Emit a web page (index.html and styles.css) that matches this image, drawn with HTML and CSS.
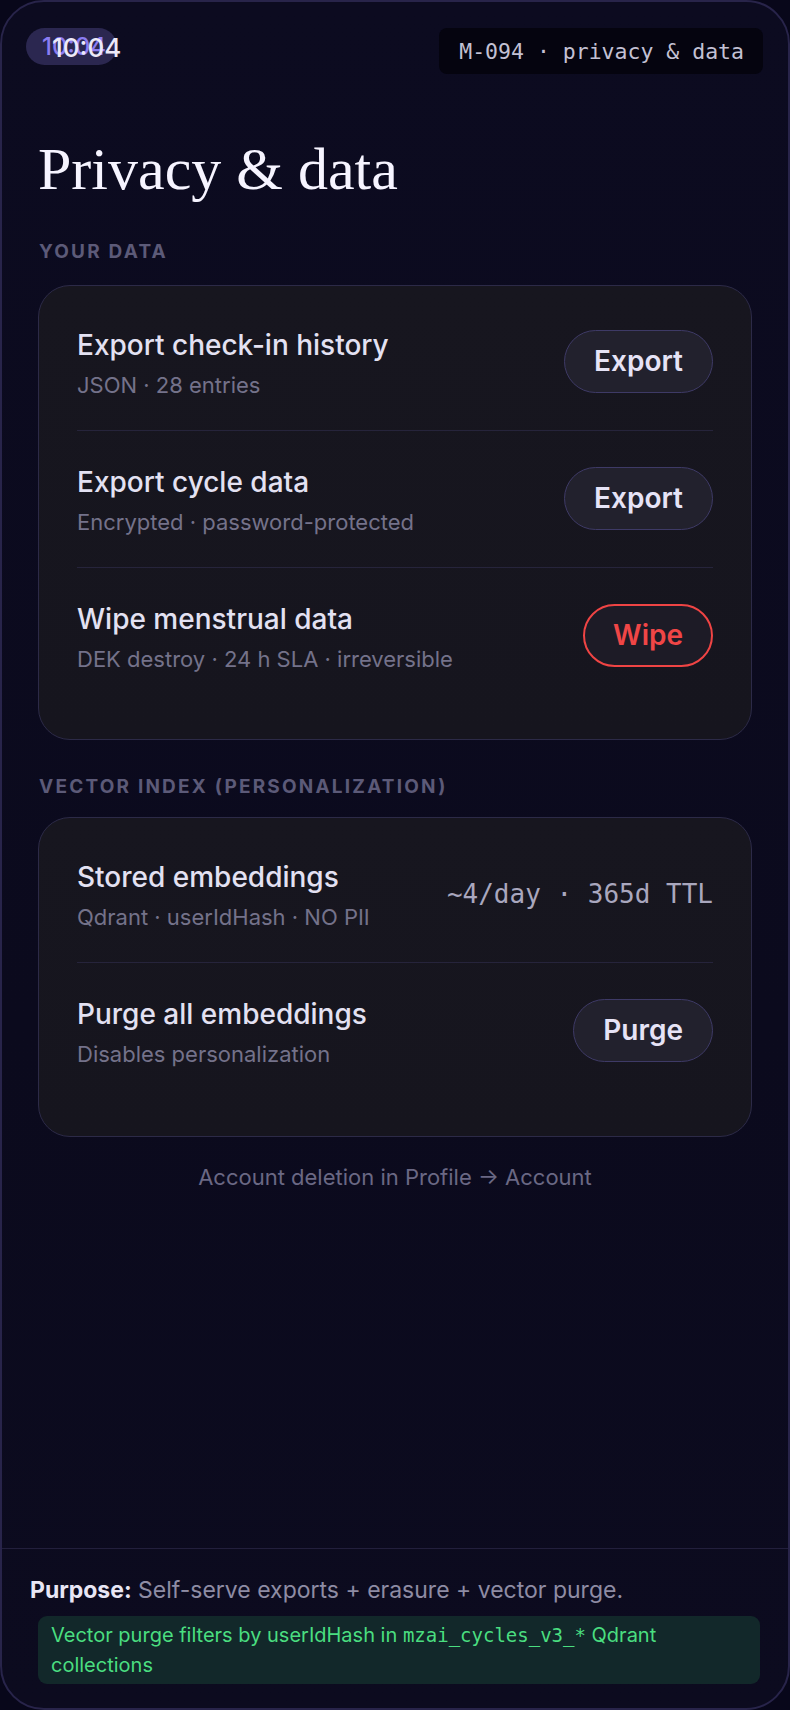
FILE: index.html
```html
<!DOCTYPE html>
<html lang="en">
<head>
<meta charset="utf-8">
<title>Privacy &amp; data</title>
<link rel="stylesheet" href="styles.css">
</head>
<body>
<div class="frame">
  <div class="status">
    <div class="pill"><span class="pill-ghost">10:04</span></div>
    <span class="time">10:04</span>
    <span class="tag">M-094 · privacy &amp; data</span>
  </div>

  <main class="content">
    <h1 class="title">Privacy &amp; data</h1>

    <div class="label">YOUR DATA</div>
    <section class="card">
      <div class="row">
        <div class="text">
          <div class="row-title">Export check-in history</div>
          <div class="row-sub">JSON · 28 entries</div>
        </div>
        <button class="btn">Export</button>
      </div>
      <div class="row">
        <div class="text">
          <div class="row-title">Export cycle data</div>
          <div class="row-sub">Encrypted · password-protected</div>
        </div>
        <button class="btn">Export</button>
      </div>
      <div class="row">
        <div class="text">
          <div class="row-title">Wipe menstrual data</div>
          <div class="row-sub">DEK destroy · 24 h SLA · irreversible</div>
        </div>
        <button class="btn btn-danger">Wipe</button>
      </div>
    </section>

    <div class="label label-2">VECTOR INDEX (PERSONALIZATION)</div>
    <section class="card">
      <div class="row">
        <div class="text">
          <div class="row-title">Stored embeddings</div>
          <div class="row-sub">Qdrant · userIdHash · NO PII</div>
        </div>
        <span class="stat">~4/day · 365d TTL</span>
      </div>
      <div class="row">
        <div class="text">
          <div class="row-title">Purge all embeddings</div>
          <div class="row-sub">Disables personalization</div>
        </div>
        <button class="btn">Purge</button>
      </div>
    </section>

    <p class="note">Account deletion in Profile → Account</p>
  </main>

  <footer class="footer">
    <p class="purpose"><strong>Purpose:</strong> Self-serve exports + erasure + vector purge.</p>
    <div class="callout">Vector purge filters by userIdHash in <code>mzai_cycles_v3_*</code> Qdrant collections</div>
  </footer>
</div>
</body>
</html>
```

FILE: styles.css
```css
* { box-sizing: border-box; }

html, body {
  margin: 0;
  padding: 0;
  background: #08071a;
}

body {
  font-family: Inter, "Noto Sans", sans-serif;
  color: #e4e2f3;
}

.frame {
  position: relative;
  width: 790px;
  height: 1710px;
  border: 2px solid #28244a;
  border-radius: 44px;
  overflow: hidden;
  background: linear-gradient(180deg, #0c0b20 0%, #0b0a1d 60%, #0c0b1f 100%);
  display: flex;
  flex-direction: column;
}

/* status bar */
.status {
  padding: 26px 0 0 24px;
  height: 63px;
}

.pill {
  width: 91px;
  height: 37px;
  border-radius: 19px;
  background: #2b2750;
  display: flex;
  align-items: center;
  padding-left: 16px;
}

.pill-ghost {
  font-size: 24px;
  font-weight: 500;
  color: #8a7cf2;
  line-height: 1;
}

.time {
  position: absolute;
  left: 50px;
  top: 30px;
  font-size: 26px;
  line-height: 31px;
  font-weight: 500;
  color: #ece9f8;
}

.tag {
  position: absolute;
  top: 26px;
  right: 25px;
  height: 46px;
  padding: 0 19px 0 20px;
  display: flex;
  align-items: center;
  border-radius: 8px;
  background: #05040f;
  font-family: "DejaVu Sans Mono", "Liberation Mono", monospace;
  font-size: 21.5px;
  color: #c3c1d4;
  white-space: nowrap;
}

/* content */
.content {
  padding: 0 36px;
}

.title {
  margin: 68px 0 0;
  font-family: "Liberation Serif", "DejaVu Serif", serif;
  font-weight: 400;
  font-size: 60px;
  line-height: 72px;
  color: #f6f4ff;
}

.label {
  margin-top: 35px;
  font-size: 19px;
  line-height: 24px;
  font-weight: 700;
  letter-spacing: 2.2px;
  color: #5c5a78;
  padding-left: 1px;
}

.label-2 {
  margin-top: 35px;
}

.card {
  margin-top: 21px;
  background: linear-gradient(180deg, #17161f 0%, #16151e 100%);
  border: 1px solid #2c2a47;
  border-radius: 32px;
  padding: 8px 38px 35px;
}

.label-2 + .card {
  margin-top: 18px;
  padding-bottom: 37px;
}

.row {
  display: flex;
  align-items: center;
  justify-content: space-between;
  padding: 34px 0 31px;
  border-bottom: 1px solid #26243b;
}

.row:last-child {
  border-bottom: none;
}

.row-title {
  font-size: 28px;
  line-height: 34px;
  font-weight: 500;
  color: #e3e1f2;
}

.row-sub {
  margin-top: 9px;
  font-size: 22px;
  line-height: 28px;
  color: #74728a;
}

.btn {
  margin-bottom: 5px;
  height: 63px;
  padding: 0 29px;
  border-radius: 32px;
  border: 1.5px solid #3e3a66;
  background: #22212d;
  color: #e6e3f6;
  font-family: Inter, "Noto Sans", sans-serif;
  font-size: 28px;
  font-weight: 600;
  display: flex;
  align-items: center;
}

.btn-danger {
  border: 2px solid #ef4444;
  color: #f04646;
  background: #1d1b26;
  padding: 0 28px;
}

.stat {
  margin-bottom: 3px;
  font-family: "DejaVu Sans Mono", "Liberation Mono", monospace;
  font-size: 26px;
  color: #a9a7be;
  white-space: nowrap;
}

.note {
  margin: 26px 0 0;
  text-align: center;
  font-size: 22px;
  line-height: 28px;
  color: #6a6884;
}

/* footer */
.footer {
  margin-top: auto;
  border-top: 1.5px solid #221f3c;
  padding: 27px 28px 24px;
}

.purpose {
  margin: 0;
  font-size: 23px;
  line-height: 28px;
  color: #8e8ca4;
}

.purpose strong {
  font-weight: 700;
  color: #e8e6f5;
}

.callout {
  margin: 12px 0 0 8px;
  padding: 4px 13px;
  background: #12282a;
  border-radius: 9px;
  font-size: 20px;
  line-height: 30px;
  color: #4ade80;
}

.callout code {
  font-family: "DejaVu Sans Mono", "Liberation Mono", monospace;
  font-size: 19px;
  line-height: 20px;
  color: #4ade80;
}
```
